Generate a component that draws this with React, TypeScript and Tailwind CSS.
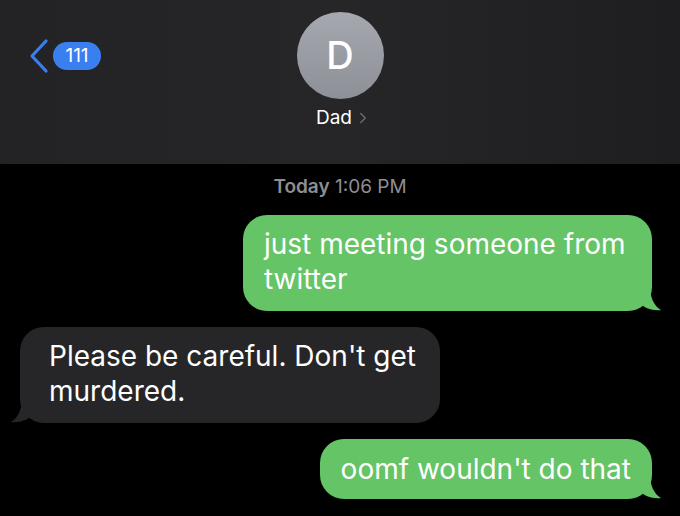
import { ChevronRight } from "lucide-react";

const font = { fontFamily: 'Inter, "Liberation Sans", Arial, sans-serif' };

function Tail({ side, color }: { side: "left" | "right"; color: string }) {
  // little hook at the bottom corner of a bubble
  if (side === "right") {
    return (
      <svg className="absolute -right-[10px] bottom-0" width="22" height="24" viewBox="0 0 22 24">
        <path d="M0 0 L10 0 C10 10 14 19 21 23 C12 24 4 21 0 16 Z" fill={color} />
      </svg>
    );
  }
  return (
    <svg className="absolute -left-[10px] bottom-0" width="22" height="24" viewBox="0 0 22 24">
      <path d="M22 0 L12 0 C12 10 8 19 1 23 C10 24 18 21 22 16 Z" fill={color} />
    </svg>
  );
}

export default function App() {
  return (
    <div className="h-[516px] w-[680px] overflow-hidden bg-black text-white" style={font}>
      {/* header */}
      <div className="relative h-[164px] bg-gradient-to-r from-[#232325] via-[#262628] to-[#1e1e20]">
        <div className="absolute left-[28px] top-[38px] flex items-center">
          <svg width="22" height="36" viewBox="0 0 22 36">
            <path d="M18 3 L4 18 L18 33" fill="none" stroke="#3a7ff0" strokeWidth="3.2" strokeLinecap="round" strokeLinejoin="round" />
          </svg>
          <div className="ml-[3px] flex h-[28px] w-[48px] items-center justify-center rounded-full bg-[#3a7ff0] text-[19px] text-white">
            111
          </div>
        </div>
        <div className="flex flex-col items-center pt-[12px]">
          <div className="flex h-[87px] w-[87px] items-center justify-center rounded-full bg-gradient-to-b from-[#a5a8ae] to-[#8d9097] text-[38px] font-medium text-white">
            D
          </div>
          <div className="mt-[5px] flex items-center pl-[8px] text-[19px] text-white">
            Dad
            <ChevronRight className="ml-[2px] h-[18px] w-[18px] text-[#6b6b70]" strokeWidth={2} />
          </div>
        </div>
      </div>

      {/* messages */}
      <div className="flex flex-col px-[20px]">
        <div className="mt-[9px] text-center text-[19px] text-[#8e8e93]">
          <span className="font-semibold">Today</span> 1:06 PM
        </div>

        <div className="mt-[13px] flex justify-end pr-[8px]">
          <div className="relative w-[409px] whitespace-nowrap rounded-[24px] bg-[#65c466] pb-[14px] pl-[21px] pr-[20px] pt-[12px] text-[28px] leading-[35px]">
            just meeting someone from
            <br />
            twitter
            <Tail side="right" color="#65c466" />
          </div>
        </div>

        <div className="mt-[16px] flex justify-start">
          <div className="relative w-[420px] whitespace-nowrap rounded-[24px] bg-[#262628] pb-[14px] pl-[29px] pr-[20px] pt-[12px] text-[28px] leading-[35px]">
            Please be careful. Don't get
            <br />
            murdered.
            <Tail side="left" color="#262628" />
          </div>
        </div>

        <div className="mt-[16px] flex justify-end pr-[8px]">
          <div className="relative whitespace-nowrap rounded-[24px] bg-[#65c466] px-[21px] py-[12px] text-[28px] leading-[36px]">
            oomf wouldn't do that
            <Tail side="right" color="#65c466" />
          </div>
        </div>
      </div>
    </div>
  );
}
